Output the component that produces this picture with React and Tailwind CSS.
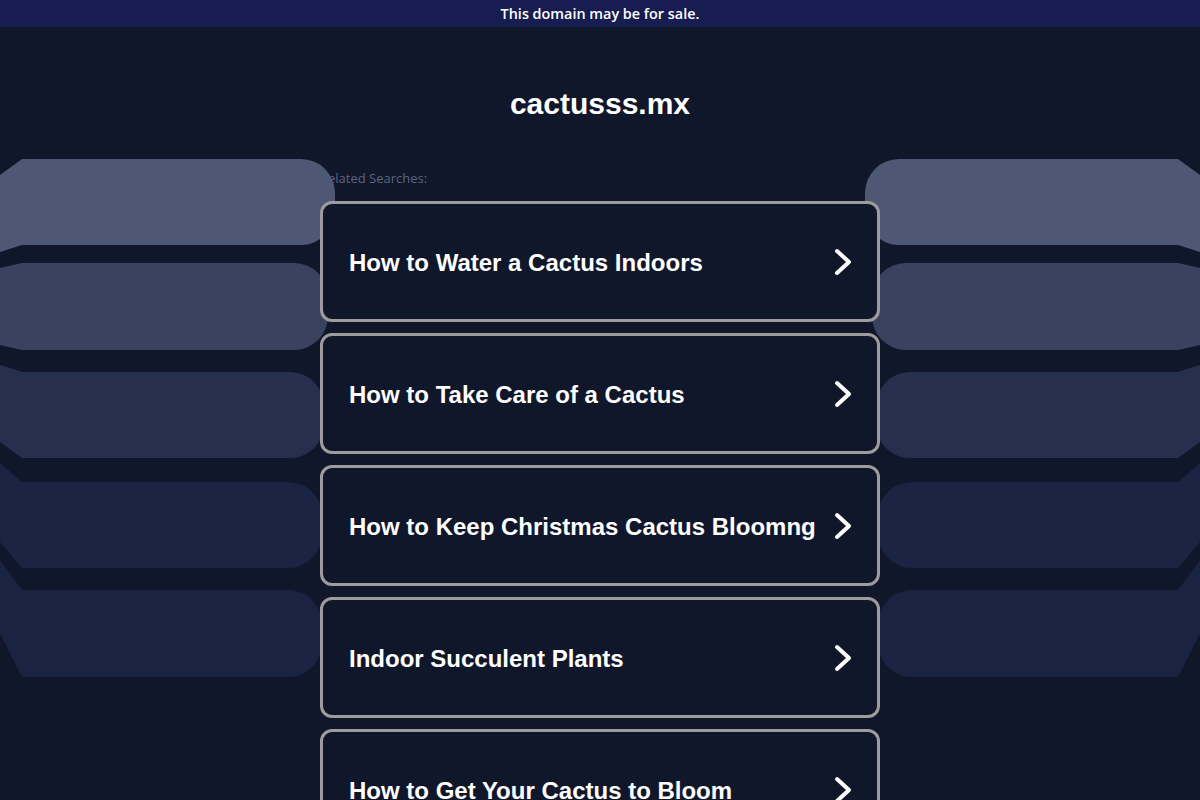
const bands = [
  { t0: 175, t: 159, b: 245, b0: 252, xr: 335, fill: '#4e5774' },
  { t0: 268, t: 263, b: 350, b0: 345, xr: 328, fill: '#3a4260' },
  { t0: 365, t: 372, b: 458, b0: 442, xr: 324, fill: '#262f4d' },
  { t0: 463, t: 482, b: 568, b0: 542, xr: 322, fill: '#1c2444' },
  { t0: 560, t: 590, b: 677, b0: 633, xr: 322, fill: '#1b2343' },
]

const searches = [
  'How to Water a Cactus Indoors',
  'How to Take Care of a Cactus',
  'How to Keep Christmas Cactus Bloomng',
  'Indoor Succulent Plants',
  'How to Get Your Cactus to Bloom',
]

const bandPath = ({ t0, t, b, b0, xr }) => {
  const r = 34
  return `M0,${t0} L22,${t} L${xr - r},${t} A${r},${r} 0 0 1 ${xr},${t + r} L${xr},${b - r} A${r},${r} 0 0 1 ${xr - r},${b} L22,${b} L0,${b0} Z`
}

const Bands = ({ className }) => (
  <svg className={className} width="340" height="700" viewBox="0 0 340 700">
    {bands.map((band, i) => (
      <path key={i} d={bandPath(band)} fill={band.fill} />
    ))}
  </svg>
)

const Chevron = () => (
  <svg width="20" height="28" viewBox="0 0 20 28" className="shrink-0">
    <path d="M4 3 L16 14 L4 25" fill="none" stroke="white" strokeWidth="4" strokeLinecap="round" strokeLinejoin="round" />
  </svg>
)

export default function App() {
  return (
    <div className="relative min-h-screen bg-[#11172b] pb-10 font-['Liberation_Sans',Arial,sans-serif]">
      {/* top banner */}
      <div className="h-[27px] bg-[#171d51] flex items-center justify-center text-white text-[14.4px] font-semibold font-['Open_Sans',sans-serif]">
        This domain may be for sale.
      </div>

      <h1 className="pt-[59px] text-center text-white text-[30px] leading-[36px] font-bold">
        cactusss.mx
      </h1>

      {/* decorative bands */}
      <Bands className="absolute top-0 left-0 pointer-events-none" />
      <Bands className="absolute top-0 right-0 -scale-x-100 pointer-events-none" />

      <div className="w-[560px] mx-auto mt-[47px]">
        <p className="text-[13px] leading-4 text-[#5d647e] font-['Open_Sans',sans-serif] pt-[1px]">Related Searches:</p>
        <div className="relative z-10 mt-[15px] flex flex-col gap-[11px]">
          {searches.map((s) => (
            <a
              key={s}
              href="#"
              className="h-[121px] bg-[#11172b] border-[3px] border-[#9c9c9c] rounded-[12px] flex items-center pl-[26px] pr-[24px]"
            >
              <span className="flex-1 pt-[2px] text-white text-[24px] font-bold whitespace-nowrap">{s}</span>
              <Chevron />
            </a>
          ))}
        </div>
      </div>
    </div>
  )
}
